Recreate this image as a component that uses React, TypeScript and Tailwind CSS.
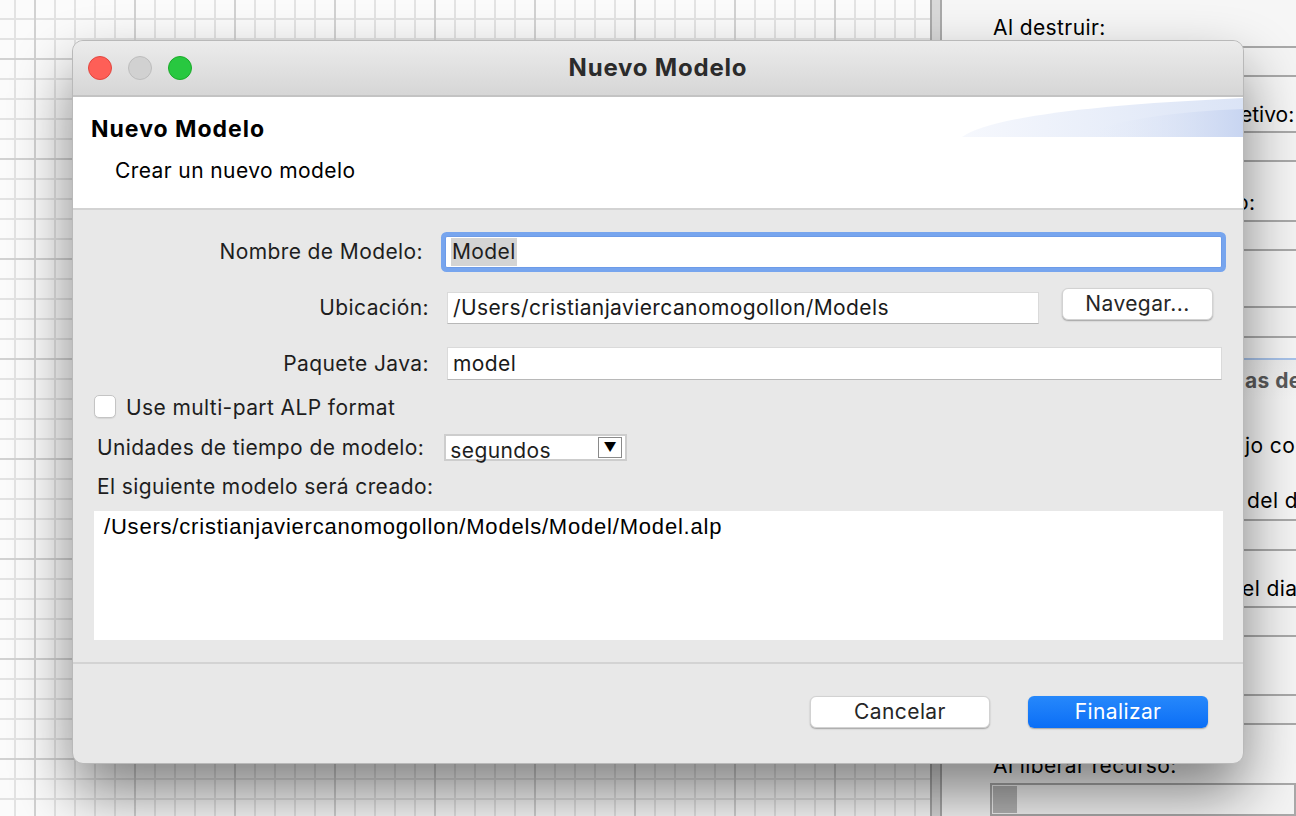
const sans = "font-['Inter',sans-serif]";

const PanelLabel = ({ text, offset = 0, className = "" }: { text: string; offset?: number; className?: string }) => (
  <div className={`h-[28px] whitespace-nowrap text-[21px] leading-[28px] tracking-[0.4px] text-black ${className}`}>
    <span style={{ marginLeft: offset }}>{text}</span>
  </div>
);

const PanelField = ({ className = "" }: { className?: string }) => (
  <div className={`h-[32px] border-y-2 border-[#a9a9a9] bg-[#f4f4f4] ${className}`} />
);

const PropertiesPanel = () => (
  <div className={`flex w-[354px] flex-col overflow-hidden bg-[#f6f6f6] pl-[48px] ${sans}`}>
    <PanelLabel text="Al destruir:" offset={3} className="mt-[14px]" />
    <PanelField className="mt-[4px]" />
    <PanelLabel text="etivo:" offset={250} className="mt-[24px] tracking-[0px]" />
    <PanelField className="mt-[2px]" />
    <PanelLabel text="o:" offset={246} className="mt-[27px]" />
    <PanelField className="mt-[3px]" />
    <PanelLabel text="Condición:" offset={3} className="mt-[27px]" />
    <PanelField />
    <div className="mt-[20px] -ml-[48px] flex h-[44px] items-center border-t-2 border-[#a8c3ea] bg-gradient-to-b from-[#eeeeee] to-[#f6f6f6] pl-[303px] pt-[2px]">
      <span className="whitespace-nowrap text-[21px] font-bold tracking-[0.4px] text-[#5a5a5a]">as de</span>
    </div>
    <PanelLabel text="jo co" offset={255} className="mt-[32px]" />
    <PanelLabel text="del d" offset={257} className="mt-[27px]" />
    <PanelField className="mt-[4px]" />
    <PanelLabel text="el dia" offset={252} className="mt-[24px]" />
    <PanelField className="mt-[3px]" />
    <PanelLabel text="Al entrar:" offset={3} className="mt-[29px]" />
    <PanelField />
    <PanelLabel text="Al liberar recurso:" offset={3} className="mt-[27px]" />
    <div className="mt-[3px] h-[34px] border-2 border-[#a9a9a9] bg-[#f4f4f4] p-[1px]">
      <div className="h-full w-[24px] bg-[#b4b4b4]" />
    </div>
  </div>
);

const Swoosh = () => (
  <svg width="281" height="40" viewBox="0 0 281 40" className="absolute right-0 top-0">
    <defs>
      <linearGradient id="sw1" x1="0" y1="0" x2="1" y2="0">
        <stop offset="0" stopColor="#f6f8fd" />
        <stop offset="1" stopColor="#dbe4f6" />
      </linearGradient>
      <linearGradient id="sw2" x1="0" y1="0" x2="1" y2="0">
        <stop offset="0" stopColor="#eef2fb" stopOpacity="0" />
        <stop offset="1" stopColor="#c8d5f1" />
      </linearGradient>
    </defs>
    <path d="M0 40 Q 40 12 281 1 L281 40 Z" fill="url(#sw1)" />
    <path d="M110 40 Q 170 16 281 12 L281 40 Z" fill="url(#sw2)" />
  </svg>
);

const Button = ({ label, primary = false, width = "w-[180px]", className = "" }: { label: string; primary?: boolean; width?: string; className?: string }) => (
  <button
    className={`flex h-[32px] shrink-0 items-center justify-center rounded-[6px] text-[21px] tracking-[0.4px] shadow-[0_1px_1.5px_rgba(0,0,0,0.3)] ${width} ${
      primary
        ? "bg-gradient-to-b from-[#2688fb] to-[#0a6ef6] text-white"
        : "border border-[#d2d2d2] bg-white text-[#262626]"
    } ${className}`}
  >
    {label}
  </button>
);

const TextInput = ({ value, className = "" }: { value: string; className?: string }) => (
  <div className={`flex h-[32px] items-center border border-[#dadada] border-b-[#b8b8b8] bg-white pl-[5px] text-[#1a1a1a] ${className}`}>
    {value}
  </div>
);

const Dialog = () => (
  <div className={`absolute left-[72px] top-[40px] flex h-[724px] w-[1172px] flex-col overflow-hidden rounded-[11px] border border-[#b9b9b9] bg-[#e8e8e8] shadow-[0_30px_60px_rgba(0,0,0,0.48)] ${sans}`}>
    {/* title bar */}
    <div className="relative flex h-[56px] shrink-0 items-center border-b-2 border-[#c3c3c3] bg-gradient-to-b from-[#ececec] to-[#d6d6d6] pl-[15px]">
      <div className="flex gap-[16px]">
        <span className="h-[24px] w-[24px] rounded-full border border-[#e2463f] bg-[#fe5f57]" />
        <span className="h-[24px] w-[24px] rounded-full border border-[#bdbdbd] bg-[#d1d1d1]" />
        <span className="h-[24px] w-[24px] rounded-full border border-[#1aab29] bg-[#28c840]" />
      </div>
      <div className="absolute inset-0 flex items-center justify-center text-[24px] font-bold tracking-[0.8px] text-[#2b2b2b]">
        Nuevo Modelo
      </div>
    </div>

    {/* header */}
    <div className="relative h-[113px] shrink-0 border-b-2 border-[#d3d3d3] bg-white">
      <Swoosh />
      <div className="pl-[18px] pt-[18px] text-[23px] font-bold leading-[28px] tracking-[1px] text-black">Nuevo Modelo</div>
      <div className="pl-[42px] pt-[14px] text-[21px] leading-[28px] tracking-[0.4px] text-black">Crear un nuevo modelo</div>
    </div>

    {/* body */}
    <div className="flex h-[454px] shrink-0 flex-col border-b-2 border-[#d3d3d3] pl-[21px] pr-[21px] text-[21px] tracking-[0.4px] text-[#1e1e1e]">
      <div className="mt-[26px] flex h-[32px] items-center">
        <div className="w-[329px] shrink-0 text-right">Nombre de Modelo:</div>
        <div className="ml-[22px] flex h-[32px] flex-1 items-center rounded-[2px] border border-[#6d9be8] bg-white pl-[5px] shadow-[0_0_0_4px_#77a5ee]">
          <span className="bg-[#d4d4d4] px-[1px] leading-[28px]">Model</span>
        </div>
      </div>

      <div className="mt-[24px] flex h-[32px] items-center">
        <div className="w-[335px] shrink-0 text-right">Ubicación:</div>
        <TextInput value="/Users/cristianjaviercanomogollon/Models" className="ml-[18px] w-[592px] shrink-0" />
        <Button label="Navegar..." width="w-[151px]" className="-mt-[8px] ml-[23px]" />
      </div>

      <div className="mt-[23px] flex h-[33px] items-center">
        <div className="w-[335px] shrink-0 text-right">Paquete Java:</div>
        <TextInput value="model" className="ml-[18px] h-[33px] flex-1" />
      </div>

      <label className="mt-[14px] flex h-[24px] items-center">
        <span className="h-[23px] w-[22px] rounded-[5px] border border-[#c4c4c4] bg-white shadow-[0_1px_1px_rgba(0,0,0,0.08)]" />
        <span className="ml-[10px] translate-y-[2px]">Use multi-part ALP format</span>
      </label>

      <div className="mt-[16px] flex h-[27px] items-center pl-[3px]">
        <span className="whitespace-nowrap">Unidades de tiempo de modelo:</span>
        <div className="ml-[20px] flex h-[27px] w-[183px] shrink-0 items-center justify-between border-2 border-[#cdcdcd] bg-white pl-[4px] pr-[3px]">
          <span className="translate-y-[3px]">segundos</span>
          <span className="flex h-[21px] w-[24px] items-center justify-center border border-[#8a8a8a] bg-white text-[13px] text-black">▼</span>
        </div>
      </div>

      <div className="mt-[15px] h-[22px] pl-[3px] leading-[22px]">El siguiente modelo será creado:</div>

      <div className="mt-[13px] h-[129px] w-[1129px] bg-white pl-[10px] pt-[2px] font-['Liberation_Sans',sans-serif] text-[22px] leading-[28px] tracking-[0.8px] text-black">
        /Users/cristianjaviercanomogollon/Models/Model/Model.alp
      </div>
    </div>

    {/* footer */}
    <div className="flex flex-1 items-start justify-end gap-[38px] pr-[35px] pt-[32px]">
      <Button label="Cancelar" />
      <Button label="Finalizar" primary />
    </div>
  </div>
);

export default function App() {
  return (
    <div className="relative flex h-[816px] w-[1296px] overflow-hidden bg-white">
      <div className="h-full w-[930px] bg-[#fbfbfb] bg-[linear-gradient(to_right,#d2d2d2_2px,transparent_2px),linear-gradient(to_bottom,#d2d2d2_2px,transparent_2px),linear-gradient(to_right,#e3e3e3_2px,transparent_2px),linear-gradient(to_bottom,#e3e3e3_2px,transparent_2px)] bg-[size:100px_100px,100px_100px,20px_20px,20px_20px] bg-[position:34px_58px,34px_58px,14px_18px,14px_18px]" />
      <div className="h-full w-[12px] border-x-2 border-[#a9a9a9] bg-[#d9d9d9]" />
      <PropertiesPanel />
      <Dialog />
    </div>
  );
}
